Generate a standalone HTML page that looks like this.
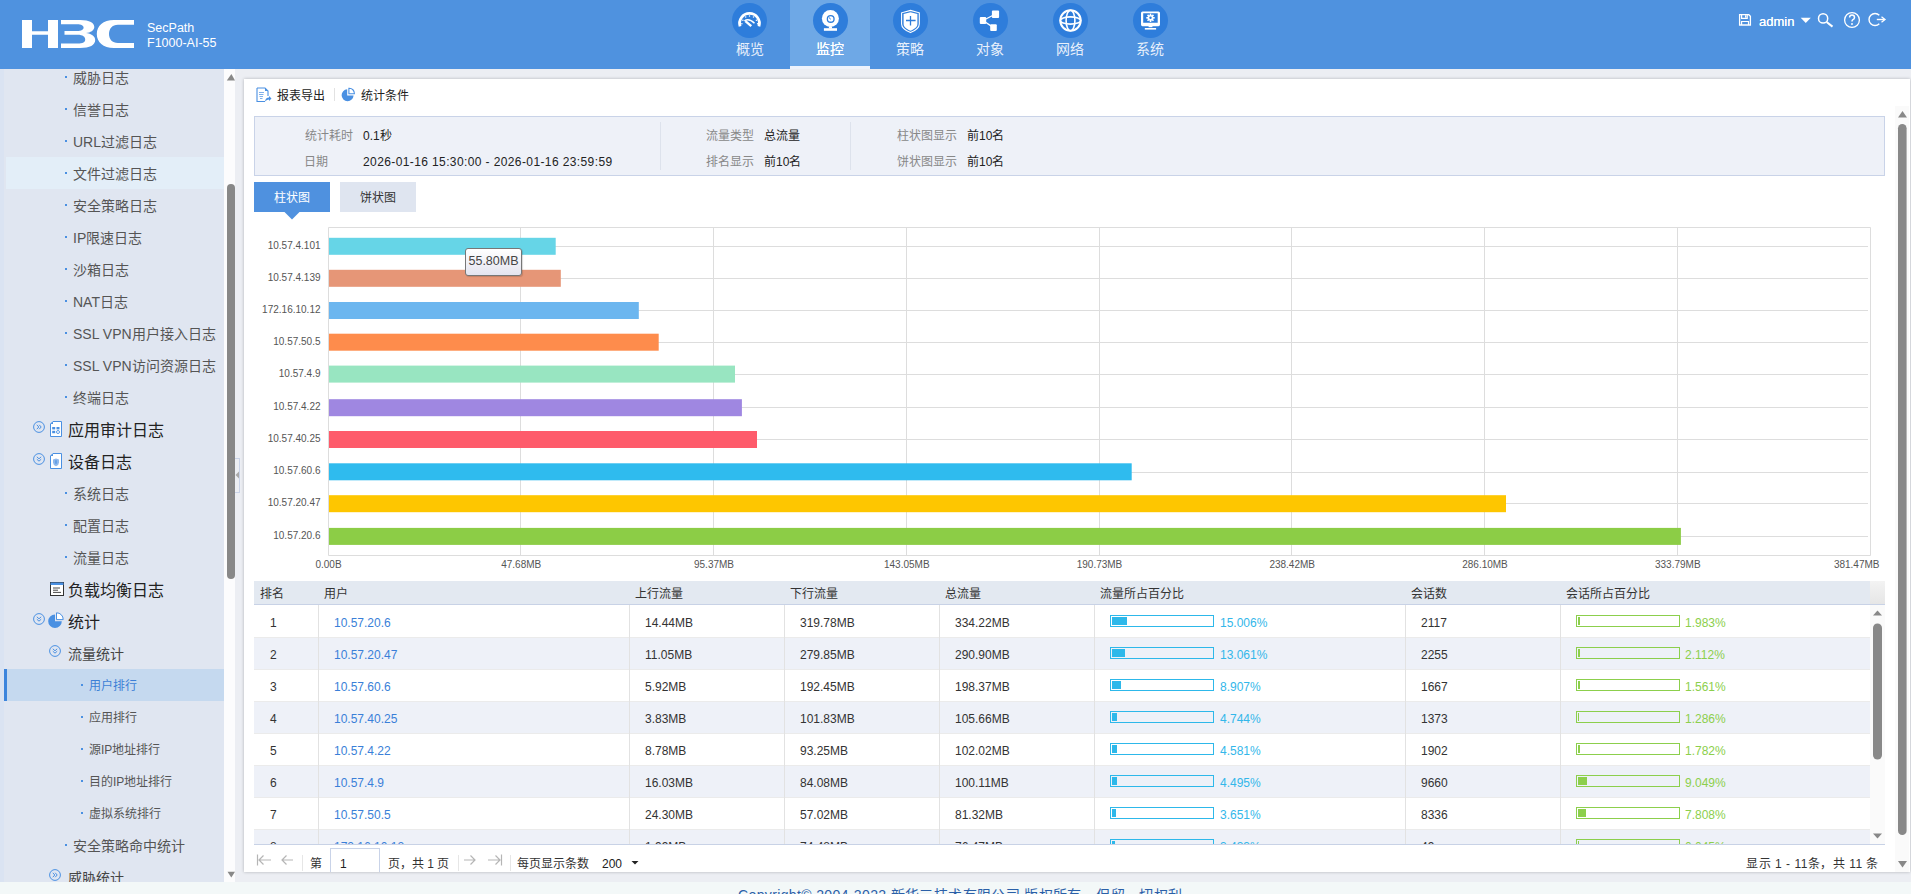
<!DOCTYPE html>
<html lang="zh-CN"><head><meta charset="utf-8">
<style>
*{box-sizing:border-box;margin:0;padding:0}
html,body{width:1911px;height:894px;overflow:hidden}
body{position:relative;background:#eceef3;font-family:"Liberation Sans",sans-serif;font-size:12px;color:#333}
.abs{position:absolute}
#hdr{position:absolute;left:0;top:0;width:1911px;height:69px;background:#4f92df}
.nav{position:absolute;top:0;width:80px;height:69px;text-align:center;color:#e8f0fb}
.nav.act{background:#6ea8e6}
.nav.act:after{content:"";position:absolute;left:0;bottom:0;width:80px;height:3px;background:#eef3fc}
.nav.act .l{color:#fff;text-shadow:0 0 0.4px #fff}
.nav .c{position:absolute;left:23px;top:3px;width:35px;height:35px;border-radius:50%;background:#2e7ddb}
.nav .c svg{position:absolute;left:0;top:0}
.nav .l{position:absolute;left:0;top:40px;width:80px;font-size:14px;line-height:18px}
#side{position:absolute;left:0;top:69px;width:224px;height:813px;background:#e0e6f1;overflow:hidden}
#side .strip{position:absolute;left:0;top:0;width:4px;height:813px;background:#dae3f2}
.si{position:absolute;left:0;width:224px;height:32px;line-height:32px;white-space:nowrap}
.si .d{position:absolute;width:2px;height:2px;background:#4a90e2;top:15px}
.si .t{position:absolute;top:1px}
.s2 .d{left:65px}.s2 .t{left:73px;font-size:14px;color:#555}
.s3 .d{left:81px}.s3 .t{left:89px;font-size:12px;color:#555}
.s1 .t{left:68px;top:2px;font-size:16px;color:#222}
.sf .t{left:68px;font-size:14px;color:#444}
.hov{position:absolute;left:6px;top:88px;width:218px;height:32px;background:#e3eef8}
.si.sel{background:#c5d9ef;left:4px;width:220px;border-left:3px solid #3d85dc}
.si.sel .d{left:74px}.si.sel .t{left:82px;color:#3d7fd6}
.txt12{font-size:12px;line-height:16px;white-space:nowrap}
.lbl{font-size:12px;line-height:19px;color:#888;text-align:right;white-space:nowrap}
.val{font-size:12px;line-height:19px;color:#222;white-space:nowrap}
.tab{width:76px;height:30px;line-height:33px;text-align:center;font-size:12px;background:#dfe5f0;color:#333}
.tab.act{background:#4f91df;color:#fff}
.th{font-size:12px;line-height:16px;color:#333;white-space:nowrap}
.td{font-size:12px;line-height:16px;color:#333;white-space:nowrap}
.td.lk{color:#3a7fd8}.td.cy{color:#33b7ea}.td.gn{color:#8ccf4c}
.pb{width:104px;height:12px;border:1px solid #2db8ea;padding:1px}
.pb i{display:block;height:8px;background:#2db8ea}
.pb.gr{border-color:#8ccf4c}.pb.gr i{background:#8ccf4c}
#sscroll{position:absolute;left:224px;top:69px;width:11px;height:813px;background:#fcfcfd}
#card{position:absolute;left:244px;top:79px;width:1666px;height:793px;background:#fff;box-shadow:0 0 3px rgba(0,0,0,.25)}
#foot{position:absolute;left:0;top:882px;width:1911px;height:12px;background:#f3f8f8;overflow:hidden}
</style></head><body>
<div id="hdr">
 <svg class="abs" style="left:0;top:0" width="140" height="60" viewBox="0 0 140 60">
  <path fill="#fff" d="M22 20h10v11.2h16V20h10v28H48V34.8H32V48H22z"/>
  <path fill="#fff" d="M61 20H80C90 20 94.3 23 94.3 27C94.3 30.5 90.5 32.6 86 33C91 33.5 95.2 36 95.2 40C95.2 45 90 48 80 48H61V43.6H77.5C83 43.6 85.2 42 85.2 39.5C85.2 37 83 34.8 77.5 34.8H64.5V31.1H77C81.5 31.1 83.6 29.6 83.6 27.6C83.6 25.6 81.5 24.2 77 24.2H61z"/>
  <path fill="#fff" d="M134 20H114C103 20 96.8 26 96.8 34C96.8 42 103 48 114 48H134V43H118C112 43 109 39 109 34C109 29 112 24.8 118 24.8H134z"/>
 </svg>

 <div class="nav" style="left:710px"><div class="c" style="left:22px"><svg width="35" height="35" viewBox="0 0 35 35">
  <path d="M8.07 23.35A9.9 9.9 0 1 1 26.93 23.35" fill="none" stroke="#fff" stroke-width="2.8"/>
  <g fill="#fff"><circle cx="10.9" cy="17.2" r="0.75"/><circle cx="13.7" cy="14.1" r="0.75"/><circle cx="17.5" cy="13.1" r="0.75"/><circle cx="21.5" cy="14.1" r="0.75"/><circle cx="24.4" cy="17.2" r="0.75"/><circle cx="9.9" cy="20.7" r="0.75"/><circle cx="25.6" cy="20.7" r="0.75"/></g>
  <path d="M12.4 17.8Q17 15 22.5 20.3" fill="none" stroke="#fff" stroke-width="1.5"/>
  <path d="M13.4 18.2L19.3 23.2" fill="none" stroke="#fff" stroke-width="2.4"/>
 </svg></div><div class="l">概览</div></div>
 <div class="nav act" style="left:790px"><div class="c"><svg width="35" height="35" viewBox="0 0 35 35">
  <circle cx="17.4" cy="15.6" r="8.5" fill="#fff"/>
  <circle cx="17.7" cy="15.9" r="3.35" fill="none" stroke="#2e7ddb" stroke-width="1.3"/>
  <path d="M16.3 14.4Q16.4 15.9 17.8 16.2" fill="none" stroke="#2e7ddb" stroke-width="0.9"/>
  <rect x="15.9" y="23.5" width="3.1" height="2" fill="#fff"/>
  <rect x="10.9" y="25.2" width="13.1" height="2.6" fill="#fff"/>
 </svg></div><div class="l">监控</div></div>
 <div class="nav" style="left:870px"><div class="c"><svg width="35" height="35" viewBox="0 0 35 35">
  <path d="M17.5 7.4L26.3 9.8V21C26.3 25 22 27.8 17.5 29.6C13 27.8 8.6 25 8.6 21V9.8Z" fill="none" stroke="#fff" stroke-width="1.1"/>
  <path d="M17.5 9.3L24.4 11.1V21C24.4 24.2 21 26.3 17.5 27.7C14 26.3 10.6 24.2 10.6 21V11.1Z" fill="#fff"/>
  <path d="M13 17.5H22.6M17.5 13V22.4" stroke="#2e7ddb" stroke-width="1.3"/>
 </svg></div><div class="l">策略</div></div>
 <div class="nav" style="left:950px"><div class="c"><svg width="35" height="35" viewBox="0 0 35 35">
  <path d="M10 17.5L22.5 11M10 17.5L20.5 24.6" stroke="#fff" stroke-width="1.3"/>
  <rect x="6.8" y="14" width="6.4" height="7" rx="1" fill="#fff"/>
  <rect x="18.9" y="7.5" width="7.2" height="7.5" rx="1" fill="#fff"/>
  <rect x="17.2" y="21.3" width="6.6" height="6.6" rx="1" fill="#fff"/>
 </svg></div><div class="l">对象</div></div>
 <div class="nav" style="left:1030px"><div class="c"><svg width="35" height="35" viewBox="0 0 35 35">
  <circle cx="17.5" cy="17.5" r="10.2" fill="none" stroke="#fff" stroke-width="2"/>
  <ellipse cx="17.5" cy="17.5" rx="4.4" ry="10.2" fill="none" stroke="#fff" stroke-width="1.6"/>
  <ellipse cx="17.5" cy="17.5" rx="10.2" ry="3.6" fill="none" stroke="#fff" stroke-width="1.6"/>
 </svg></div><div class="l">网络</div></div>
 <div class="nav" style="left:1110px"><div class="c"><svg width="35" height="35" viewBox="0 0 35 35">
  <path d="M9.5 8.4H25.4Q27 8.4 27 10V21.6Q27 23.2 25.4 23.2H9.5Q8 23.2 8 21.6V10Q8 8.4 9.5 8.4ZM10.2 10.3V19.7H24.7V10.3Z" fill="#fff" fill-rule="evenodd"/>
  <rect x="15.6" y="23" width="3.8" height="1.2" fill="#fff"/>
  <rect x="11.8" y="25" width="11.3" height="1.6" fill="#fff"/>
  <g transform="translate(17.5 14.8)" fill="#fff"><circle r="2.9"/><path d="M-0.8 -4.2H0.8V4.2H-0.8Z"/><path d="M-0.8 -4.2H0.8V4.2H-0.8Z" transform="rotate(45)"/><path d="M-0.8 -4.2H0.8V4.2H-0.8Z" transform="rotate(90)"/><path d="M-0.8 -4.2H0.8V4.2H-0.8Z" transform="rotate(135)"/><circle r="1.2" fill="#2e7ddb"/></g>
 </svg></div><div class="l">系统</div></div>
 <svg class="abs" style="left:1730px;top:8px" width="165" height="26" viewBox="1730 8 165 26">
  <path d="M1739.6 14.7H1748.8L1750.4 16.3V25H1739.6Z" fill="none" stroke="#fff" stroke-width="1.3"/>
  <path d="M1741.6 14.7V18.4H1747.2V14.7M1745.6 15.2V17.6M1741.6 25V21.5H1748.5V25" fill="none" stroke="#fff" stroke-width="1.2"/>
  <path d="M1800.7 17.7H1810.8L1805.75 23Z" fill="#fff"/>
  <circle cx="1823.1" cy="18.4" r="4.6" fill="none" stroke="#fff" stroke-width="1.5"/>
  <path d="M1826.6 22L1832.5 26.6" stroke="#fff" stroke-width="2"/>
  <circle cx="1852" cy="20" r="7.4" fill="none" stroke="#fff" stroke-width="1.3"/>
  <path d="M1849.6 17.6Q1849.6 15 1852 15Q1854.5 15 1854.5 17.4Q1854.5 18.8 1852.6 19.8Q1852 20.2 1852 21.6" fill="none" stroke="#fff" stroke-width="1.5"/>
  <circle cx="1852" cy="24" r="0.95" fill="#fff"/>
  <path d="M1879.3 15.3A6 6 0 1 0 1879.3 23.7" fill="none" stroke="#fff" stroke-width="1.4"/>
  <path d="M1876.8 19.5H1884" stroke="#fff" stroke-width="1.4"/>
  <path d="M1881.5 16.8L1885 19.5L1881.5 22.2" fill="none" stroke="#fff" stroke-width="1.3"/>
 </svg>
 <div class="abs" style="left:1759px;top:12.5px;color:#fff;font-size:13px;line-height:17px;text-shadow:0 0 0.3px #fff">admin</div>
 <div class="abs" style="left:147px;top:21px;color:#fff;font-size:12.5px;line-height:14.5px">SecPath<br>F1000-AI-55</div>
</div>
<div id="side"><div class="strip"></div><div class="hov"></div><div class="si s2" style="top:-8px"><i class="d"></i><span class="t">威胁日志</span></div>
<div class="si s2" style="top:24px"><i class="d"></i><span class="t">信誉日志</span></div>
<div class="si s2" style="top:56px"><i class="d"></i><span class="t">URL过滤日志</span></div>
<div class="si s2" style="top:88px"><i class="d"></i><span class="t">文件过滤日志</span></div>
<div class="si s2" style="top:120px"><i class="d"></i><span class="t">安全策略日志</span></div>
<div class="si s2" style="top:152px"><i class="d"></i><span class="t">IP限速日志</span></div>
<div class="si s2" style="top:184px"><i class="d"></i><span class="t">沙箱日志</span></div>
<div class="si s2" style="top:216px"><i class="d"></i><span class="t">NAT日志</span></div>
<div class="si s2" style="top:248px"><i class="d"></i><span class="t">SSL VPN用户接入日志</span></div>
<div class="si s2" style="top:280px"><i class="d"></i><span class="t">SSL VPN访问资源日志</span></div>
<div class="si s2" style="top:312px"><i class="d"></i><span class="t">终端日志</span></div>
<div class="si s1" style="top:344px"><svg class="abs" style="left:33px;top:8px" width="12" height="12" viewBox="0 0 12 12"><circle cx="6" cy="6" r="5.4" fill="none" stroke="#4a90e2" stroke-width="1"/><path d="M3.8 3.8L5.8 6L3.8 8.2M6.2 3.8L8.2 6L6.2 8.2" fill="none" stroke="#4a90e2" stroke-width="1"/></svg><svg class="abs" style="left:50px;top:8px" width="13" height="17" viewBox="0 0 13 17"><path d="M3 0.5H11.5V15.5H0.5V3Z" fill="#fff" stroke="#4a90e2" stroke-width="1"/><path d="M0.5 3H3V0.5" fill="#4a90e2"/><rect x="2.2" y="6" width="3" height="2.4" fill="#4a90e2"/><rect x="6.5" y="6" width="3" height="2.4" fill="#4a90e2"/><rect x="2.2" y="9.8" width="3" height="2.4" fill="#4a90e2"/><circle cx="8" cy="11" r="1.5" fill="none" stroke="#4a90e2" stroke-width="0.9"/></svg><span class="t">应用审计日志</span></div>
<div class="si s1" style="top:376px"><svg class="abs" style="left:33px;top:8px" width="12" height="12" viewBox="0 0 12 12"><circle cx="6" cy="6" r="5.4" fill="none" stroke="#4a90e2" stroke-width="1"/><path d="M3.8 3.8L6 5.8L8.2 3.8M3.8 6.2L6 8.2L8.2 6.2" fill="none" stroke="#4a90e2" stroke-width="1"/></svg><svg class="abs" style="left:50px;top:8px" width="13" height="17" viewBox="0 0 13 17"><path d="M3 0.5H11.5V15.5H0.5V3Z" fill="#fff" stroke="#4a90e2" stroke-width="1"/><path d="M0.5 3H3V0.5" fill="#4a90e2"/><path d="M6 5.5L9 6.6V9.5Q9 12 6 13.2Q3 12 3 9.5V6.6Z" fill="#8fb8ec"/><path d="M6 7.3V10.8" stroke="#4a90e2" stroke-width="1.2"/></svg><span class="t">设备日志</span></div>
<div class="si s2" style="top:408px"><i class="d"></i><span class="t">系统日志</span></div>
<div class="si s2" style="top:440px"><i class="d"></i><span class="t">配置日志</span></div>
<div class="si s2" style="top:472px"><i class="d"></i><span class="t">流量日志</span></div>
<div class="si s1" style="top:504px"><svg class="abs" style="left:50px;top:9px" width="14" height="14" viewBox="0 0 14 14"><rect x="0.5" y="0.5" width="13" height="13" fill="#fff" stroke="#333" stroke-width="1"/><rect x="0.5" y="0.5" width="13" height="2.5" fill="#4a90e2"/><path d="M3 6H10M3 8.2H8M3 10.4H11" stroke="#333" stroke-width="0.9"/></svg><span class="t">负载均衡日志</span></div>
<div class="si s1" style="top:536px"><svg class="abs" style="left:33px;top:8px" width="12" height="12" viewBox="0 0 12 12"><circle cx="6" cy="6" r="5.4" fill="none" stroke="#4a90e2" stroke-width="1"/><path d="M3.8 3.8L6 5.8L8.2 3.8M3.8 6.2L6 8.2L8.2 6.2" fill="none" stroke="#4a90e2" stroke-width="1"/></svg><svg class="abs" style="left:48px;top:7px" width="16" height="17" viewBox="0 0 16 17"><path d="M7 2.5A6.8 6.8 0 1 0 13.8 9.3H7Z" fill="#4a90e2"/><path d="M8.5 0.8A6.6 6.6 0 0 1 15.2 7.6H8.5Z" fill="#fff" stroke="#4a90e2" stroke-width="1"/></svg><span class="t">统计</span></div>
<div class="si sf" style="top:568px"><svg class="abs" style="left:49px;top:8px" width="12" height="12" viewBox="0 0 12 12"><circle cx="6" cy="6" r="5.4" fill="none" stroke="#4a90e2" stroke-width="1"/><path d="M3.8 3.8L6 5.8L8.2 3.8M3.8 6.2L6 8.2L8.2 6.2" fill="none" stroke="#4a90e2" stroke-width="1"/></svg><span class="t">流量统计</span></div>
<div class="si s3 sel" style="top:600px"><i class="d"></i><span class="t">用户排行</span></div>
<div class="si s3" style="top:632px"><i class="d"></i><span class="t">应用排行</span></div>
<div class="si s3" style="top:664px"><i class="d"></i><span class="t">源IP地址排行</span></div>
<div class="si s3" style="top:696px"><i class="d"></i><span class="t">目的IP地址排行</span></div>
<div class="si s3" style="top:728px"><i class="d"></i><span class="t">虚拟系统排行</span></div>
<div class="si s2" style="top:760px"><i class="d"></i><span class="t">安全策略命中统计</span></div>
<div class="si sf" style="top:792px"><svg class="abs" style="left:49px;top:8px" width="12" height="12" viewBox="0 0 12 12"><circle cx="6" cy="6" r="5.4" fill="none" stroke="#4a90e2" stroke-width="1"/><path d="M3.8 3.8L5.8 6L3.8 8.2M6.2 3.8L8.2 6L6.2 8.2" fill="none" stroke="#4a90e2" stroke-width="1"/></svg><span class="t">威胁统计</span></div></div>
<div id="sscroll"></div>
<svg class="abs" style="left:224px;top:69px" width="11" height="813" viewBox="0 0 11 813"><path d="M2.8 11.5L7.4 5L11 11.5Z" fill="#888"/><rect x="3" y="115" width="8" height="395" rx="4" fill="#888"/><path d="M3.5 802.7L7.3 808.6L11 802.7Z" fill="#888"/></svg>
<div class="abs" style="left:235px;top:458px;width:5px;height:35px;border:1px solid #c9d3e8;border-left:none;background:#eceef3"></div>
<svg class="abs" style="left:235px;top:470px" width="5" height="10" viewBox="0 0 5 10"><path d="M0.5 5L4 1.5V8.5Z" fill="#aaa"/></svg>
<div id="card"></div>
<div class="abs" style="left:256px;top:87px"><svg width="16" height="16" viewBox="0 0 16 16"><path d="M1 1H9L12 4V9M9 14.5H1V1" fill="none" stroke="#4a90e2" stroke-width="1.1"/><path d="M9 1V4H12" fill="#4a90e2"/><path d="M3 5.5H8M3 7.5H7.5M3.5 9.5H7M4 11.5H6.5" stroke="#7fb0ea" stroke-width="1.2"/><path d="M9 14.5Q9.5 10.5 13 10.5V9L15.5 11.5L13 14V12.4Q11 12.4 9 14.5Z" fill="#4a90e2"/></svg></div>
<div class="abs txt12" style="left:277px;top:88px;color:#222">报表导出</div>
<div class="abs" style="left:334px;top:88px;width:1px;height:13px;background:#e2e2e2"></div>
<div class="abs" style="left:341px;top:87px"><svg width="15" height="15" viewBox="0 0 15 15"><path d="M6.2 2.2A6 6 0 1 0 12.6 8.6H6.2Z" fill="#4a90e2"/><path d="M7.9 1.2A5.2 5.2 0 0 1 13.4 6.8H7.9Z" fill="#fff" stroke="#4a90e2" stroke-width="1.1"/></svg></div>
<div class="abs txt12" style="left:361px;top:88px;color:#222">统计条件</div>

<div class="abs" style="left:254px;top:116px;width:1631px;height:60px;background:#eef1f8;border:1px solid #c9d3e8"></div>
<div class="abs" style="left:660px;top:122px;width:1px;height:48px;background:#dde2ec"></div>
<div class="abs" style="left:850px;top:122px;width:1px;height:48px;background:#dde2ec"></div>
<div class="abs lbl" style="left:244px;width:108.5px;top:127px">统计耗时</div><div class="abs val" style="left:363px;top:127px">0.1秒</div>
<div class="abs lbl" style="left:244px;width:84px;top:153px">日期</div><div class="abs val" style="left:363px;top:153px;letter-spacing:0.39px">2026-01-16 15:30:00 - 2026-01-16 23:59:59</div>
<div class="abs lbl" style="left:650px;width:104px;top:127px">流量类型</div><div class="abs val" style="left:764px;top:127px">总流量</div>
<div class="abs lbl" style="left:650px;width:104px;top:153px">排名显示</div><div class="abs val" style="left:764px;top:153px">前10名</div>
<div class="abs lbl" style="left:850px;width:107px;top:127px">柱状图显示</div><div class="abs val" style="left:967px;top:127px">前10名</div>
<div class="abs lbl" style="left:850px;width:107px;top:153px">饼状图显示</div><div class="abs val" style="left:967px;top:153px">前10名</div>

<div class="abs tab act" style="left:254px;top:182px">柱状图</div>
<svg class="abs" style="left:283px;top:211px" width="18" height="9" viewBox="0 0 18 9"><path d="M0.5 0H17.5L9 8.5Z" fill="#4f91df"/></svg>
<div class="abs tab" style="left:340px;top:182px">饼状图</div>
<svg class="abs" style="left:250px;top:220px" width="1650" height="360" viewBox="250 220 1650 360" font-family="Liberation Sans" font-size="10">
<path d="M520.50 227.5V555" stroke="#ddd" stroke-width="1"/>
<path d="M713.50 227.5V555" stroke="#ddd" stroke-width="1"/>
<path d="M906.50 227.5V555" stroke="#ddd" stroke-width="1"/>
<path d="M1099.50 227.5V555" stroke="#ddd" stroke-width="1"/>
<path d="M1291.50 227.5V555" stroke="#ddd" stroke-width="1"/>
<path d="M1484.50 227.5V555" stroke="#ddd" stroke-width="1"/>
<path d="M1677.50 227.5V555" stroke="#ddd" stroke-width="1"/>
<path d="M328.5 246.5H1868" stroke="#ddd" stroke-width="1"/>
<path d="M328.5 278.5H1868" stroke="#ddd" stroke-width="1"/>
<path d="M328.5 310.5H1868" stroke="#ddd" stroke-width="1"/>
<path d="M328.5 342.5H1868" stroke="#ddd" stroke-width="1"/>
<path d="M328.5 374.5H1868" stroke="#ddd" stroke-width="1"/>
<path d="M328.5 407.5H1868" stroke="#ddd" stroke-width="1"/>
<path d="M328.5 439.5H1868" stroke="#ddd" stroke-width="1"/>
<path d="M328.5 472.5H1868" stroke="#ddd" stroke-width="1"/>
<path d="M328.5 503.5H1868" stroke="#ddd" stroke-width="1"/>
<path d="M328.5 536.5H1868" stroke="#ddd" stroke-width="1"/>
<path d="M328.5 227.5H1870.5V555.5H328.5Z" fill="none" stroke="#ddd" stroke-width="1"/>
<rect x="329" y="237.8" width="226.7" height="17" fill="#66d5e7"/>
<text x="320.5" y="248.8" text-anchor="end" fill="#555">10.57.4.101</text>
<rect x="329" y="269.8" width="231.8" height="17" fill="#e69677"/>
<text x="320.5" y="280.8" text-anchor="end" fill="#555">10.57.4.139</text>
<rect x="329" y="302" width="309.8" height="17" fill="#6cb6ef"/>
<text x="320.5" y="313.0" text-anchor="end" fill="#555">172.16.10.12</text>
<rect x="329" y="333.7" width="329.7" height="17" fill="#fe8c4c"/>
<text x="320.5" y="344.7" text-anchor="end" fill="#555">10.57.50.5</text>
<rect x="329" y="365.6" width="406.0" height="17" fill="#98e5c1"/>
<text x="320.5" y="376.6" text-anchor="end" fill="#555">10.57.4.9</text>
<rect x="329" y="399.2" width="412.9" height="17" fill="#9f87e1"/>
<text x="320.5" y="410.2" text-anchor="end" fill="#555">10.57.4.22</text>
<rect x="329" y="431" width="428.0" height="17" fill="#fe5b6b"/>
<text x="320.5" y="442.0" text-anchor="end" fill="#555">10.57.40.25</text>
<rect x="329" y="463.3" width="802.7" height="17" fill="#2fbbee"/>
<text x="320.5" y="474.3" text-anchor="end" fill="#555">10.57.60.6</text>
<rect x="329" y="495.2" width="1177.0" height="17" fill="#fec600"/>
<text x="320.5" y="506.2" text-anchor="end" fill="#555">10.57.20.47</text>
<rect x="329" y="527.9" width="1351.9" height="17" fill="#8ccd46"/>
<text x="320.5" y="538.9" text-anchor="end" fill="#555">10.57.20.6</text>
<text x="328.5" y="568" text-anchor="middle" fill="#555">0.00B</text>
<text x="521.2" y="568" text-anchor="middle" fill="#555">47.68MB</text>
<text x="714.0" y="568" text-anchor="middle" fill="#555">95.37MB</text>
<text x="906.8" y="568" text-anchor="middle" fill="#555">143.05MB</text>
<text x="1099.5" y="568" text-anchor="middle" fill="#555">190.73MB</text>
<text x="1292.2" y="568" text-anchor="middle" fill="#555">238.42MB</text>
<text x="1485.0" y="568" text-anchor="middle" fill="#555">286.10MB</text>
<text x="1677.8" y="568" text-anchor="middle" fill="#555">333.79MB</text>
<text x="1856.7" y="568" text-anchor="middle" fill="#555">381.47MB</text>
</svg>
<div class="abs" style="left:465px;top:248px;width:57px;height:28px;border:1px solid #777;border-radius:3px;background:linear-gradient(#fff,#e4e4ef);font-size:12.5px;line-height:25px;text-align:center;color:#444;box-shadow:1px 1px 1px rgba(0,0,0,.15)">55.80MB</div>
<div class="abs" style="left:254px;top:581px;width:1631px;height:264px;overflow:hidden;border-bottom:1px solid #c8d2e6">
<div class="abs" style="left:0;top:0;width:1616px;height:24px;background:#e3e9f1;border-bottom:1px solid #c8d2e6"></div>
<div class="abs" style="left:1616px;top:0;width:15px;height:24px;background:linear-gradient(#f3f3f3,#e6e6e6);border-bottom:1px solid #c8d2e6"></div>
<div class="abs th" style="left:6px;top:5px">排名</div>
<div class="abs th" style="left:70px;top:5px">用户</div>
<div class="abs th" style="left:381px;top:5px">上行流量</div>
<div class="abs th" style="left:536px;top:5px">下行流量</div>
<div class="abs th" style="left:691px;top:5px">总流量</div>
<div class="abs th" style="left:846px;top:5px">流量所占百分比</div>
<div class="abs th" style="left:1157px;top:5px">会话数</div>
<div class="abs th" style="left:1312px;top:5px">会话所占百分比</div>
<div class="abs" style="left:0;top:24px;width:1616px;height:33px;background:#fff;border-bottom:1px solid #ebebeb"></div>
<div class="abs" style="left:0;top:57px;width:1616px;height:32px;background:#eef1f8;border-bottom:1px solid #ebebeb"></div>
<div class="abs" style="left:0;top:89px;width:1616px;height:32px;background:#fff;border-bottom:1px solid #ebebeb"></div>
<div class="abs" style="left:0;top:121px;width:1616px;height:32px;background:#eef1f8;border-bottom:1px solid #ebebeb"></div>
<div class="abs" style="left:0;top:153px;width:1616px;height:32px;background:#fff;border-bottom:1px solid #ebebeb"></div>
<div class="abs" style="left:0;top:185px;width:1616px;height:32px;background:#eef1f8;border-bottom:1px solid #ebebeb"></div>
<div class="abs" style="left:0;top:217px;width:1616px;height:32px;background:#fff;border-bottom:1px solid #ebebeb"></div>
<div class="abs" style="left:0;top:249px;width:1616px;height:32px;background:#eef1f8;border-bottom:1px solid #ebebeb"></div>
<div class="abs" style="left:64px;top:24px;width:1px;height:240px;background:#e2e2e2"></div>
<div class="abs" style="left:375px;top:24px;width:1px;height:240px;background:#e2e2e2"></div>
<div class="abs" style="left:530px;top:24px;width:1px;height:240px;background:#e2e2e2"></div>
<div class="abs" style="left:685px;top:24px;width:1px;height:240px;background:#e2e2e2"></div>
<div class="abs" style="left:840px;top:24px;width:1px;height:240px;background:#e2e2e2"></div>
<div class="abs" style="left:1151px;top:24px;width:1px;height:240px;background:#e2e2e2"></div>
<div class="abs" style="left:1306px;top:24px;width:1px;height:240px;background:#e2e2e2"></div>
<div class="abs td" style="left:16px;top:34px">1</div>
<div class="abs td lk" style="left:80px;top:34px">10.57.20.6</div>
<div class="abs td" style="left:391px;top:34px">14.44MB</div>
<div class="abs td" style="left:546px;top:34px">319.78MB</div>
<div class="abs td" style="left:701px;top:34px">334.22MB</div>
<div class="abs pb" style="left:856px;top:34px"><i style="width:15px"></i></div>
<div class="abs td cy" style="left:966px;top:34px">15.006%</div>
<div class="abs td" style="left:1167px;top:34px">2117</div>
<div class="abs pb gr" style="left:1322px;top:34px"><i style="width:2px"></i></div>
<div class="abs td gn" style="left:1431px;top:34px">1.983%</div>
<div class="abs td" style="left:16px;top:66px">2</div>
<div class="abs td lk" style="left:80px;top:66px">10.57.20.47</div>
<div class="abs td" style="left:391px;top:66px">11.05MB</div>
<div class="abs td" style="left:546px;top:66px">279.85MB</div>
<div class="abs td" style="left:701px;top:66px">290.90MB</div>
<div class="abs pb" style="left:856px;top:66px"><i style="width:13px"></i></div>
<div class="abs td cy" style="left:966px;top:66px">13.061%</div>
<div class="abs td" style="left:1167px;top:66px">2255</div>
<div class="abs pb gr" style="left:1322px;top:66px"><i style="width:2px"></i></div>
<div class="abs td gn" style="left:1431px;top:66px">2.112%</div>
<div class="abs td" style="left:16px;top:98px">3</div>
<div class="abs td lk" style="left:80px;top:98px">10.57.60.6</div>
<div class="abs td" style="left:391px;top:98px">5.92MB</div>
<div class="abs td" style="left:546px;top:98px">192.45MB</div>
<div class="abs td" style="left:701px;top:98px">198.37MB</div>
<div class="abs pb" style="left:856px;top:98px"><i style="width:9px"></i></div>
<div class="abs td cy" style="left:966px;top:98px">8.907%</div>
<div class="abs td" style="left:1167px;top:98px">1667</div>
<div class="abs pb gr" style="left:1322px;top:98px"><i style="width:1.5px"></i></div>
<div class="abs td gn" style="left:1431px;top:98px">1.561%</div>
<div class="abs td" style="left:16px;top:130px">4</div>
<div class="abs td lk" style="left:80px;top:130px">10.57.40.25</div>
<div class="abs td" style="left:391px;top:130px">3.83MB</div>
<div class="abs td" style="left:546px;top:130px">101.83MB</div>
<div class="abs td" style="left:701px;top:130px">105.66MB</div>
<div class="abs pb" style="left:856px;top:130px"><i style="width:5px"></i></div>
<div class="abs td cy" style="left:966px;top:130px">4.744%</div>
<div class="abs td" style="left:1167px;top:130px">1373</div>
<div class="abs pb gr" style="left:1322px;top:130px"><i style="width:1.3px"></i></div>
<div class="abs td gn" style="left:1431px;top:130px">1.286%</div>
<div class="abs td" style="left:16px;top:162px">5</div>
<div class="abs td lk" style="left:80px;top:162px">10.57.4.22</div>
<div class="abs td" style="left:391px;top:162px">8.78MB</div>
<div class="abs td" style="left:546px;top:162px">93.25MB</div>
<div class="abs td" style="left:701px;top:162px">102.02MB</div>
<div class="abs pb" style="left:856px;top:162px"><i style="width:4.6px"></i></div>
<div class="abs td cy" style="left:966px;top:162px">4.581%</div>
<div class="abs td" style="left:1167px;top:162px">1902</div>
<div class="abs pb gr" style="left:1322px;top:162px"><i style="width:1.8px"></i></div>
<div class="abs td gn" style="left:1431px;top:162px">1.782%</div>
<div class="abs td" style="left:16px;top:194px">6</div>
<div class="abs td lk" style="left:80px;top:194px">10.57.4.9</div>
<div class="abs td" style="left:391px;top:194px">16.03MB</div>
<div class="abs td" style="left:546px;top:194px">84.08MB</div>
<div class="abs td" style="left:701px;top:194px">100.11MB</div>
<div class="abs pb" style="left:856px;top:194px"><i style="width:4.5px"></i></div>
<div class="abs td cy" style="left:966px;top:194px">4.495%</div>
<div class="abs td" style="left:1167px;top:194px">9660</div>
<div class="abs pb gr" style="left:1322px;top:194px"><i style="width:9px"></i></div>
<div class="abs td gn" style="left:1431px;top:194px">9.049%</div>
<div class="abs td" style="left:16px;top:226px">7</div>
<div class="abs td lk" style="left:80px;top:226px">10.57.50.5</div>
<div class="abs td" style="left:391px;top:226px">24.30MB</div>
<div class="abs td" style="left:546px;top:226px">57.02MB</div>
<div class="abs td" style="left:701px;top:226px">81.32MB</div>
<div class="abs pb" style="left:856px;top:226px"><i style="width:3.6px"></i></div>
<div class="abs td cy" style="left:966px;top:226px">3.651%</div>
<div class="abs td" style="left:1167px;top:226px">8336</div>
<div class="abs pb gr" style="left:1322px;top:226px"><i style="width:7.8px"></i></div>
<div class="abs td gn" style="left:1431px;top:226px">7.808%</div>
<div class="abs td" style="left:16px;top:258px">8</div>
<div class="abs td lk" style="left:80px;top:258px">172.16.10.12</div>
<div class="abs td" style="left:391px;top:258px">1.99MB</div>
<div class="abs td" style="left:546px;top:258px">74.48MB</div>
<div class="abs td" style="left:701px;top:258px">76.47MB</div>
<div class="abs pb" style="left:856px;top:258px"><i style="width:3.4px"></i></div>
<div class="abs td cy" style="left:966px;top:258px">3.433%</div>
<div class="abs td" style="left:1167px;top:258px">49</div>
<div class="abs pb gr" style="left:1322px;top:258px"><i style="width:1px"></i></div>
<div class="abs td gn" style="left:1431px;top:258px">0.045%</div>
<div class="abs" style="left:1616px;top:24px;width:15px;height:239px;background:#fafafa"></div>
<svg class="abs" style="left:1616px;top:24px" width="15" height="239" viewBox="0 0 15 239"><path d="M3 10.5L7.5 5.5L12 10.5Z" fill="#888"/><rect x="3" y="18.5" width="9" height="136" rx="4.5" fill="#888"/><path d="M3 228.5L7.5 233.5L12 228.5Z" fill="#888"/></svg>
</div>
<svg class="abs" style="left:250px;top:850px" width="400" height="22" viewBox="250 850 400 22" fill="none" stroke="#b5b5b5" stroke-width="1.2">
 <path d="M257.5 854.5V865.5M271 860H259.5M263.5 855.5L259 860L263.5 864.5"/>
 <path d="M293 860H282M286.5 855.5L282 860L286.5 864.5"/>
 <path d="M464 860H475M470.5 855.5L475 860L470.5 864.5"/>
 <path d="M488 860H500M495.5 855.5L500 860L495.5 864.5M501.5 854.5V865.5"/>
 <path d="M302.5 855V871M458.5 855V871M510.5 855V871" stroke="#e6e6e6" stroke-width="1"/>
 <path d="M631.5 861H638.5L635 864.5Z" fill="#222" stroke="none"/>
</svg>
<div class="abs txt12" style="left:310px;top:856px;color:#333">第</div>
<div class="abs" style="left:330px;top:848px;width:50px;height:24px;border:1px solid #c9d3e8;border-bottom:none;background:#fff"></div>
<div class="abs txt12" style="left:340px;top:856px;color:#222">1</div>
<div class="abs txt12" style="left:388px;top:856px;color:#333">页，共 1 页</div>
<div class="abs txt12" style="left:517px;top:856px;color:#333">每页显示条数</div>
<div class="abs txt12" style="left:602px;top:856px;color:#222">200</div>
<div class="abs txt12" style="left:1648px;width:231px;text-align:right;top:856px;color:#333;letter-spacing:0.5px">显示 1 - 11条，共 11 条</div>
<div class="abs" style="left:1895px;top:106px;width:14px;height:766px;background:#fafafa"></div>
<svg class="abs" style="left:1895px;top:106px" width="14" height="766" viewBox="0 0 14 766"><path d="M3 11.6L7.5 5L12 11.6Z" fill="#888"/><rect x="3" y="18" width="8.6" height="711" rx="4.3" fill="#888"/><path d="M3 755L7.5 761.5L12 755Z" fill="#888"/></svg>


<div id="foot"><div class="abs" style="left:738px;top:4px;font-size:14px;line-height:18px;color:#2b60a8;white-space:nowrap;letter-spacing:0.37px">Copyright© 2004-2022 新华三技术有限公司 版权所有，保留一切权利。</div></div>
</body></html>
